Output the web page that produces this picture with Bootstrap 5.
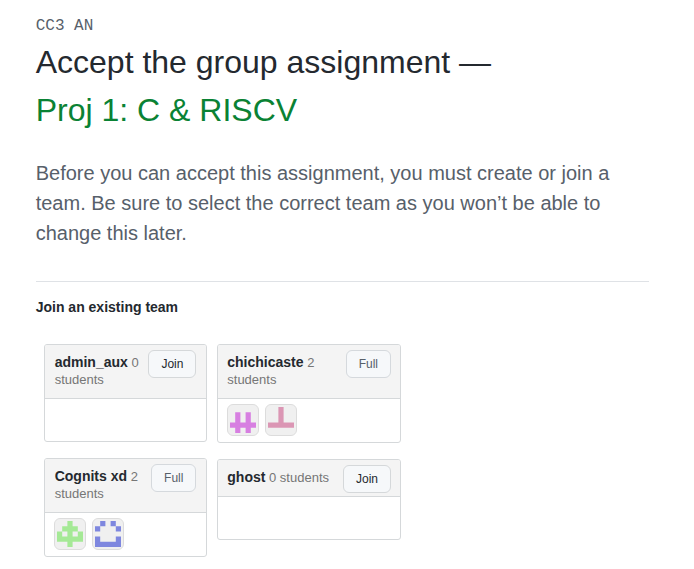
<!DOCTYPE html>
<html lang="en">
<head>
<meta charset="utf-8">
<meta name="viewport" content="width=device-width, initial-scale=1">
<title>Accept the group assignment</title>
<link rel="stylesheet" href="https://cdn.jsdelivr.net/npm/bootstrap@5.3.0/dist/css/bootstrap.min.css">
<style>
body { font-family: "Liberation Sans", Arial, sans-serif; font-size: 14px; line-height: 21px; color: #24292f; background: #fff; overflow: hidden; }
.page { padding: 12px 45px 0 35.7px; }
.org-name { font: 16px/24px "Liberation Mono", monospace; color: #57606a; padding-top: 2px; }
.page-title { font-size: 32px; line-height: 48px; font-weight: 400; margin: 0 0 24px; color: #24292f; }
.assignment { color: #0a8234; }
.intro { font-size: 20px; line-height: 30px; color: #57606a; margin-bottom: 33px; }
.teams-heading { font-size: 14px; line-height: 21px; font-weight: 700; border-top: 1px solid #dfe2e6; padding-top: 15px; margin: 0 0 26px; }
.team-list { gap: 10px; padding-left: 8px; }
.col-a { width: 163px; gap: 16px; }
.col-b { width: 184px; gap: 16px; }
.team { border: 1px solid #d5d8da; border-radius: 3px; background: #fff; }
.team-head { background: #f4f4f4; border-bottom: 1px solid #d5d8da; padding: 5px 9.3px 0 10px; height: 54px; border-radius: 2px 2px 0 0; }
.col-b .team-head { padding-left: 9.6px; padding-right: 8.7px; }
.team-head.single { height: 37px; }
.team-label { font-size: 13px; line-height: 17px; color: #767676; padding-top: 4px; }
.team-label strong { font-size: 14px; color: #24292f; }
.team-body { height: 43px; padding: 5px 9px; gap: 6px; }
.team-body.vacant { height: 42px; }
.team-btn { font-size: 12px; line-height: 18px; height: 28px; padding: 4px 12px; color: #24292f; background: #f6f8fa; border: 1px solid #d5d8da; border-radius: 6px; }
.team-btn:disabled { color: #57606a; background: #f6f8fa; border-color: #d5d9dd; opacity: 1; }
.identicon { width: 32px; height: 32px; flex: none; }
</style>
</head>
<body>
<main class="page">
  <div class="org-name">CC3 AN</div>
  <h1 class="page-title">Accept the group assignment —<br><span class="assignment">Proj 1: C &amp; RISCV</span></h1>
  <p class="intro">Before you can accept this assignment, you must create or join a team. Be sure to select the correct team as you won’t be able to change this later.</p>
  <h2 class="teams-heading">Join an existing team</h2>
  <div class="team-list d-flex align-items-start">
    <div class="col-a d-flex flex-column">
      <section class="team">
        <div class="team-head d-flex justify-content-between align-items-start">
          <div class="team-label"><strong>admin_aux</strong> 0<br>students</div>
          <button class="btn team-btn" type="button">Join</button>
        </div>
        <div class="team-body vacant d-flex"></div>
      </section>
      <section class="team">
        <div class="team-head d-flex justify-content-between align-items-start">
          <div class="team-label"><strong>Cognits xd</strong> 2<br>students</div>
          <button class="btn team-btn" type="button" disabled>Full</button>
        </div>
        <div class="team-body d-flex">
          <svg class="identicon" viewBox="0 0 32 32"><rect x=".5" y=".5" width="31" height="31" rx="5.5" fill="#f0f0f0" stroke="#dcdcdc"/><path transform="translate(3 3) scale(5.2)" fill="#a5e996" d="M2 0h1v1h1v1h1v2H3v1H2V4H0V2h1V1h1zM1 2v1h1V2zM3 2v1h1V2z"/></svg>
          <svg class="identicon" viewBox="0 0 32 32"><rect x=".5" y=".5" width="31" height="31" rx="5.5" fill="#f0f0f0" stroke="#dcdcdc"/><path transform="translate(3 3) scale(5.2)" fill="#7e87df" d="M1 0h1v1H1zM3 0h1v1H3zM0 1h1v1H0zM4 1h1v1H4zM0 3h1v1h3V3h1v2H0z"/></svg>
        </div>
      </section>
    </div>
    <div class="col-b d-flex flex-column">
      <section class="team">
        <div class="team-head d-flex justify-content-between align-items-start">
          <div class="team-label"><strong>chichicaste</strong> 2<br>students</div>
          <button class="btn team-btn" type="button" disabled>Full</button>
        </div>
        <div class="team-body d-flex">
          <svg class="identicon" viewBox="0 0 32 32"><rect x=".5" y=".5" width="31" height="31" rx="5.5" fill="#f0f0f0" stroke="#dcdcdc"/><path transform="translate(3 3) scale(5.2)" fill="#d77fe1" d="M1 1h1v2h1V1h1v2h1v1H4v1H3V4H2v1H1V4H0V3h1z"/></svg>
          <svg class="identicon" viewBox="0 0 32 32"><rect x=".5" y=".5" width="31" height="31" rx="5.5" fill="#f0f0f0" stroke="#dcdcdc"/><path transform="translate(3 3) scale(5.2)" fill="#db96b4" d="M2 0h1v3h2v1H0V3h2z"/></svg>
        </div>
      </section>
      <section class="team">
        <div class="team-head single d-flex justify-content-between align-items-start">
          <div class="team-label"><strong>ghost</strong> 0 students</div>
          <button class="btn team-btn" type="button">Join</button>
        </div>
        <div class="team-body vacant d-flex"></div>
      </section>
    </div>
  </div>
</main>
<script src="https://cdn.jsdelivr.net/npm/bootstrap@5.3.0/dist/js/bootstrap.bundle.min.js"></script>
</body>
</html>
